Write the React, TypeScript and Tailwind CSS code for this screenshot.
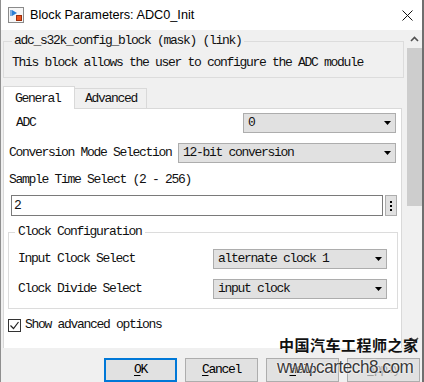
import React from "react";

type DropdownProps = {
  value: string;
  className: string;
};

const Dropdown = (props: DropdownProps) => {
  const { value, className } = props;
  return (
    <div
      className={`flex h-[20px] items-center justify-between border border-[#adadad] bg-[#e1e1e1] pr-[4px] pl-[4px] ${className}`}
    >
      <span>{value}</span>
      <svg width="7" height="4" viewBox="0 0 7 4">
        <path d="M0 0H7L3.5 4Z" fill="#000" />
      </svg>
    </div>
  );
};

type ButtonProps = {
  hotkey: string;
  rest: string;
  primary?: boolean;
  disabled?: boolean;
};

const DialogButton = (props: ButtonProps) => {
  const { hotkey, rest, primary, disabled } = props;
  return (
    <div
      className={`flex h-[24px] w-[73px] items-center justify-center bg-[#e1e1e1] ${
        primary ? "border-2 border-[#0078d7]" : "border border-[#adadad]"
      } ${disabled ? "text-[#a0a0a0]" : "text-[#000]"}`}
    >
      <span className="underline underline-offset-2">{hotkey}</span>
      {rest}
    </div>
  );
};

const BlockIcon = () => (
  <svg width="16" height="16" viewBox="0 0 16 16">
    <rect x="0.5" y="0.5" width="15" height="15" fill="#f6f6f6" stroke="#8a8a8a" />
    <path d="M3 3V9" stroke="#2a7fd4" strokeWidth="1.2" />
    <path d="M4 3L9 6L4 9Z" fill="#2a7fd4" />
    <rect x="8.5" y="8.5" width="5" height="5" fill="#e8541e" stroke="#9c2f0c" />
  </svg>
);

export default function App() {
  return (
    <div className="relative h-[382px] w-[424px] overflow-hidden border-r-2 border-l border-r-[#6f6f6f] border-l-[#8f8f8f] bg-white font-['Liberation_Mono',monospace] text-[13px] leading-[16px] tracking-[-1.3px] text-[#111]">
      {/* title bar */}
      <div className="flex h-[30px] items-center bg-white">
        <div className="ml-[7px]">
          <BlockIcon />
        </div>
        <span className="ml-[6px] font-['Liberation_Sans',sans-serif] text-[12.7px] tracking-normal text-[#000]">
          Block Parameters: ADC0_Init
        </span>
        <svg className="mr-[9px] ml-auto" width="11" height="11" viewBox="0 0 11 11">
          <path d="M0.5 0.5L10.5 10.5M10.5 0.5L0.5 10.5" stroke="#111" strokeWidth="1" />
        </svg>
      </div>

      {/* scrolled area */}
      <div className="flex h-[318px] bg-[#f0f0f0]">
        <div className="w-[406px] overflow-hidden pt-[3px]">
          <fieldset className="ml-[2px] w-[401px] border border-[#dcdcdc] pr-2 pb-[6px] pl-[8px]">
            <legend className="px-[2px] leading-[16px]">adc_s32k_config_block (mask) (link)</legend>
            <div className="mt-[6px] pl-[0px]">This block allows the user to configure the ADC module</div>
          </fieldset>

          {/* tabs */}
          <div className="mt-[8px] ml-[2px] flex h-[22px] items-end">
            <div className="relative z-10 h-[23px] w-[72px] self-start border-x border-t border-[#d9d9d9] bg-white pt-[4px] pl-[11px]">
              General
            </div>
            <div className="h-[20px] w-[72px] self-start mt-[2px] border-t border-r border-[#d9d9d9] bg-[#f0f0f0] pt-[2px] pl-[10px]">
              Advanced
            </div>
          </div>

          <div className="ml-[2px] w-[399px] border border-[#d9d9d9] bg-white pt-[4px] pb-[40px]">
            <div className="flex h-[20px] items-center">
              <span className="ml-[12px]">ADC</span>
              <Dropdown value="0" className="mr-[5px] ml-auto w-[153px]" />
            </div>
            <div className="mt-[10px] flex h-[20px] items-center">
              <span className="ml-[5px]">Conversion Mode Selection</span>
              <Dropdown value="12-bit conversion" className="mr-[5px] ml-auto w-[218px]" />
            </div>
            <div className="mt-[9px] ml-[5px]">Sample Time Select (2 - 256)</div>
            <div className="mt-[7px] flex h-[21px] items-stretch">
              <div className="ml-[7px] flex w-[372px] items-center border border-[#7a7a7a] bg-white pl-[2px]">2</div>
              <div className="ml-[2px] flex w-[12px] flex-col items-center justify-center gap-[2px] border border-[#adadad] bg-[#e1e1e1]">
                <span className="h-[2px] w-[2px] bg-[#000]" />
                <span className="h-[2px] w-[2px] bg-[#000]" />
                <span className="h-[2px] w-[2px] bg-[#000]" />
              </div>
            </div>

            <fieldset className="mt-[8px] ml-[4px] w-[390px] border border-[#dcdcdc] pr-[10px] pb-[9px] pl-[6px]">
              <legend className="px-[3px] leading-[16px]">Clock Configuration</legend>
              <div className="mt-[9px] flex h-[20px] items-center pl-[3px]">
                <span>Input Clock Select</span>
                <Dropdown value="alternate clock 1" className="ml-auto w-[174px]" />
              </div>
              <div className="mt-[10px] flex h-[20px] items-center pl-[3px]">
                <span>Clock Divide Select</span>
                <Dropdown value="input clock" className="ml-auto w-[174px]" />
              </div>
            </fieldset>

            <div className="mt-[9px] flex h-[14px] items-center">
              <div className="ml-[4px] flex h-[13px] w-[13px] items-center justify-center border border-[#333] bg-white">
                <svg width="11" height="11" viewBox="0 0 11 11">
                  <path d="M1.5 5.5L4.5 8.5L9.5 2" fill="none" stroke="#222" strokeWidth="1.2" />
                </svg>
              </div>
              <span className="ml-[4px]">Show advanced options</span>
            </div>
          </div>
        </div>

        {/* scrollbar */}
        <div className="flex w-[15px] flex-col bg-[#f0f0f0]">
          <div className="flex h-[18px] items-center justify-center">
            <svg width="9" height="6" viewBox="0 0 9 6">
              <path d="M1 5L4.5 1.5L8 5" fill="none" stroke="#505050" strokeWidth="1.6" />
            </svg>
          </div>
          <div className="h-[158px] bg-[#cdcdcd]" />
          <div className="mt-auto flex h-[17px] items-center justify-center">
            <svg width="9" height="6" viewBox="0 0 9 6">
              <path d="M1 1L4.5 4.5L8 1" fill="none" stroke="#505050" strokeWidth="1.6" />
            </svg>
          </div>
        </div>
      </div>

      {/* button bar */}
      <div className="flex h-[34px] gap-[8px] bg-[#f0f0f0] pt-[10px] pl-[103px]">
        <DialogButton hotkey="O" rest="K" primary />
        <DialogButton hotkey="C" rest="ancel" />
        <DialogButton hotkey="H" rest="elp" />
        <DialogButton hotkey="A" rest="pply" disabled />
      </div>

      {/* watermark */}
      <div className="absolute top-[336px] left-[278px] font-['Noto_Sans_CJK_SC',sans-serif] text-[15px] leading-[17px] font-bold tracking-[0.5px] text-[#111]">
        中国汽车工程师之家
      </div>
      <div className="absolute top-[356px] left-[276px] origin-left scale-x-90 font-['Liberation_Sans',sans-serif] text-[19px] leading-[22px] tracking-[-0.5px] text-[#3a3a3a] [text-shadow:0_0_2px_#fff,0_0_2px_#fff]">
        www.cartech8.com
      </div>
    </div>
  );
}
